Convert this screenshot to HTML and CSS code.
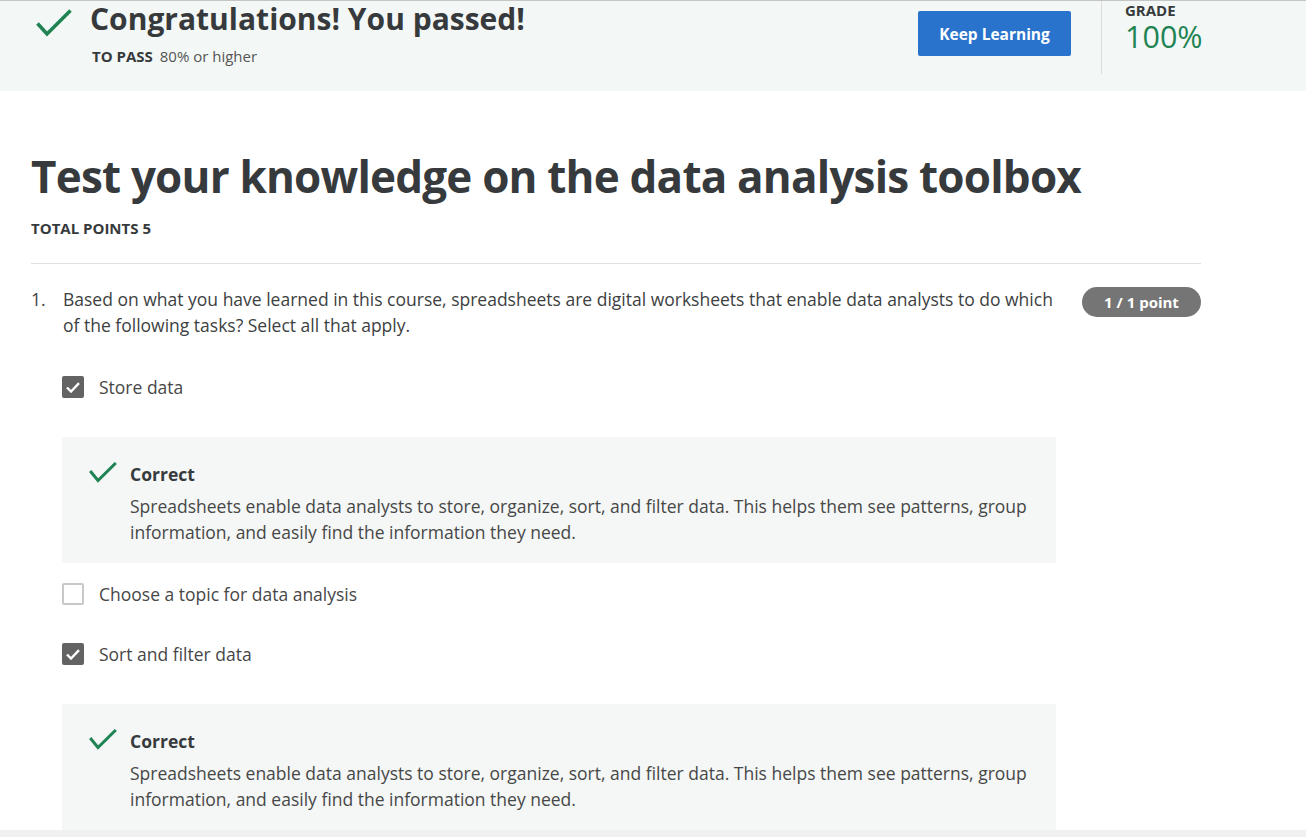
FILE: index.html
```html
<!DOCTYPE html>
<html lang="en">
<head>
<meta charset="utf-8">
<title>Test your knowledge on the data analysis toolbox</title>
<link rel="stylesheet" href="styles.css">
</head>
<body>
<header class="banner">
  <div class="banner-main">
    <svg class="banner-check" width="36" height="28" viewBox="0 0 36 28"><polyline points="1.5,14.5 11,25 34.5,1.5" fill="none" stroke="#1f8354" stroke-width="3.6"/></svg>
    <div class="banner-text">
      <h2 class="banner-title">Congratulations! You passed!</h2>
      <p class="pass-line"><span class="pass-label">TO PASS</span> 80% or higher</p>
    </div>
  </div>
  <a class="btn-primary" href="#">Keep Learning</a>
  <div class="grade">
    <div class="grade-label">GRADE</div>
    <div class="grade-value">100%</div>
  </div>
</header>

<main class="content">
  <h1 class="quiz-title">Test your knowledge on the data analysis toolbox</h1>
  <div class="total-points">TOTAL POINTS 5</div>
  <hr class="divider">

  <section class="question">
    <div class="q-number">1.</div>
    <div class="q-body">
      <div class="q-head">
        <p class="q-text">Based on what you have learned in this course, spreadsheets are digital worksheets that enable data analysts to do which of the following tasks? Select all that apply.</p>
        <span class="pill">1 / 1 point</span>
      </div>

      <div class="choice has-feedback">
        <label class="option"><span class="box checked"><svg width="14" height="11" viewBox="0 0 14 11"><polyline points="1,5.5 5,9.5 13,1.2" fill="none" stroke="#fff" stroke-width="2.4"/></svg></span>Store data</label>
        <div class="feedback">
          <svg class="fb-check" width="28" height="21" viewBox="0 0 28 21"><polyline points="1.2,9 9,18.5 26.8,1" fill="none" stroke="#1f8354" stroke-width="3"/></svg>
          <div class="fb-text">
            <div class="fb-title">Correct</div>
            <p class="fb-body">Spreadsheets enable data analysts to store, organize, sort, and filter data. This helps them see patterns, group information, and easily find the information they need.</p>
          </div>
        </div>
      </div>

      <div class="choice">
        <label class="option"><span class="box"></span>Choose a topic for data analysis</label>
      </div>

      <div class="choice has-feedback">
        <label class="option"><span class="box checked"><svg width="14" height="11" viewBox="0 0 14 11"><polyline points="1,5.5 5,9.5 13,1.2" fill="none" stroke="#fff" stroke-width="2.4"/></svg></span>Sort and filter data</label>
        <div class="feedback">
          <svg class="fb-check" width="28" height="21" viewBox="0 0 28 21"><polyline points="1.2,9 9,18.5 26.8,1" fill="none" stroke="#1f8354" stroke-width="3"/></svg>
          <div class="fb-text">
            <div class="fb-title">Correct</div>
            <p class="fb-body">Spreadsheets enable data analysts to store, organize, sort, and filter data. This helps them see patterns, group information, and easily find the information they need.</p>
          </div>
        </div>
      </div>
    </div>
  </section>
</main>
<div class="bottom-bar"></div>
</body>
</html>
```

FILE: styles.css
```css
* { box-sizing: border-box; }

html, body {
  margin: 0;
  padding: 0;
  background: #ffffff;
}

body {
  font-family: "Open Sans", "Noto Sans", "Liberation Sans", sans-serif;
  color: #3d3f41;
  overflow: hidden;
  height: 837px;
}

/* Banner */
.banner {
  display: flex;
  align-items: flex-start;
  height: 91px;
  background: #f3f8f6;
  border-top: 1px solid #c4c6c6;
}

.banner-main {
  display: flex;
  align-items: flex-start;
  padding-left: 36px;
  width: 918px;
}

.banner-check {
  margin-top: 8px;
  flex: none;
}

.banner-text {
  margin-left: 18px;
}

.banner-title {
  margin: 0;
  font-size: 30px;
  line-height: 36px;
  font-weight: 700;
  color: #373a3c;
}

.pass-line {
  margin: 9px 0 0 2px;
  font-size: 15px;
  line-height: 20px;
  color: #555;
}

.pass-label {
  font-weight: 700;
  color: #373a3c;
  margin-right: 3px;
}

.btn-primary {
  flex: none;
  margin-top: 10px;
  width: 153px;
  height: 45px;
  display: flex;
  align-items: center;
  justify-content: center;
  background: #2a73cc;
  color: #fff;
  font-size: 15.5px;
  font-weight: 700;
  text-decoration: none;
  border-radius: 2px;
}

.grade {
  margin-left: 30px;
  height: 73px;
  border-left: 1px solid #dcdcdc;
  padding-left: 23px;
}

.grade-label {
  font-size: 15px;
  font-weight: 700;
  line-height: 18px;
  color: #373a3c;
}

.grade-value {
  font-size: 30.5px;
  line-height: 34px;
  color: #1f8354;
}

/* Content */
.content {
  padding: 57px 0 0 31px;
  width: 1201px;
}

.quiz-title {
  margin: 0;
  font-size: 44px;
  line-height: 56px;
  font-weight: 700;
  letter-spacing: -0.8px;
  color: #373a3c;
}

.total-points {
  margin-top: 14px;
  font-size: 15px;
  line-height: 20px;
  font-weight: 700;
  color: #373a3c;
}

.divider {
  margin: 25px 0 0 0;
  border: 0;
  border-top: 1px solid #e0e0e0;
  height: 0;
}

.question {
  display: flex;
  margin-top: 22px;
  font-size: 17.5px;
  line-height: 26px;
}

.q-number {
  width: 32px;
  flex: none;
  color: #3d3f41;
}

.q-body {
  flex: 1;
}

.q-head {
  display: flex;
  align-items: flex-start;
  justify-content: space-between;
  margin-bottom: 38px;
}

.q-text {
  margin: 0;
  width: 995px;
  color: #3d3f41;
}

.pill {
  flex: none;
  margin-top: 1px;
  width: 119px;
  height: 30px;
  border-radius: 15px;
  background: #757575;
  color: #fff;
  font-size: 15px;
  font-weight: 700;
  line-height: 30px;
  text-align: center;
}

.choice {
  margin-bottom: 38px;
}

.choice.has-feedback {
  margin-bottom: 20px;
}

.option {
  display: flex;
  align-items: center;
  height: 22px;
  color: #474747;
  font-size: 17.5px;
}

.box {
  flex: none;
  width: 22px;
  height: 22px;
  margin-left: -1px;
  margin-right: 15px;
  border: 2px solid #c8c8c8;
  border-radius: 2px;
  display: flex;
  align-items: center;
  justify-content: center;
  background: #fff;
}

.box.checked {
  background: #636363;
  border-color: #636363;
}

.feedback {
  margin-top: 39px;
  margin-left: -1px;
  width: 994px;
  background: #f4f7f6;
  display: flex;
  align-items: flex-start;
  padding: 24px 24px 18px 27px;
}

.fb-check {
  flex: none;
  margin-top: 1px;
}

.fb-text {
  margin-left: 13px;
}

.fb-title {
  font-weight: 700;
  font-size: 17.5px;
  line-height: 26px;
  color: #373a3c;
  margin-bottom: 6px;
}

.fb-body {
  margin: 0;
  font-size: 17.5px;
  line-height: 26px;
  color: #474747;
}

.bottom-bar {
  position: fixed;
  left: 0;
  right: 0;
  bottom: 0;
  height: 7px;
  background: #f0f0f0;
}
```
